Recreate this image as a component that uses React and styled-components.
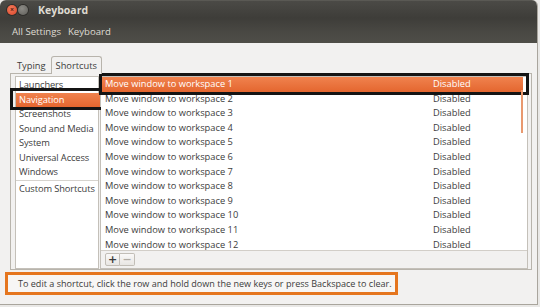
import React from 'react';
import styled, { createGlobalStyle } from 'styled-components';

const GlobalStyle = createGlobalStyle`
  html, body { margin: 0; padding: 0; background: #e9e8e6; }
  body { font-family: "Open Sans", "DejaVu Sans", sans-serif; font-size: 9.3px; color: #3c3c3c; }
`;

const Window = styled.div`
  width: 537px;
  height: 304px;
  background: #f2f1f0;
  border-radius: 6px 6px 0 0;
  border-right: 1px solid #a9a59d;
  border-bottom: 1px solid #a9a59d;
  display: flex;
  flex-direction: column;
  overflow: hidden;
`;

const TitleBar = styled.div`
  height: 18px;
  background: linear-gradient(#4b4a46, #3e3d39);
  display: flex;
  align-items: center;
  padding-left: 7px;
  border-top: 1px solid #5a5954;
  box-sizing: border-box;
`;

const WinButton = styled.span`
  width: 10px;
  height: 10px;
  border-radius: 50%;
  margin-right: 1px;
  display: flex;
  align-items: center;
  justify-content: center;
  background: ${p => (p.close ? 'radial-gradient(circle at 40% 35%, #f47a5a, #d9452a)' : 'radial-gradient(circle at 40% 35%, #8c8b86, #5f5e59)')};
  box-shadow: 0 0 0 1px #2e2d2a;
  font-size: 7px;
  line-height: 1;
  color: #5a1c10;
  font-weight: bold;
`;

const Title = styled.span`
  margin-left: 9px;
  font-weight: bold;
  font-size: 10.5px;
  color: #dfdbd2;
`;

const Toolbar = styled.div`
  height: 25px;
  background: linear-gradient(#3e3d39, #4a4944 60%, #4f4e48);
  display: flex;
  align-items: center;
  padding: 2px 0 0 12px;
  box-sizing: border-box;
  gap: 7px;
  font-size: 9.6px;
  color: #dfdbd2;
`;

const Body = styled.div`
  flex: 1;
  display: flex;
  flex-direction: column;
  padding: 12px 5px 0 5px;
`;

const Tabs = styled.div`
  display: flex;
  margin-left: 5px;
  height: 18px;
  align-items: flex-end;
`;

const Tab = styled.div`
  height: 18px;
  padding: 0 4px 0 ${p => (p.active ? 4 : 6)}px;
  display: flex;
  align-items: center;
  box-sizing: border-box;
  border: 1px solid ${p => (p.active ? '#b8b4ac' : 'transparent')};
  border-bottom: none;
  border-radius: 3px 3px 0 0;
  background: ${p => (p.active ? '#f2f1f0' : 'transparent')};
  margin-bottom: -1px;
  position: relative;
  z-index: 1;
`;

const Notebook = styled.div`
  margin-left: 5px;
  height: 197px;
  box-sizing: border-box;
  border: 1px solid #b8b4ac;
  padding: 2px 3px 0 4px;
  display: flex;
`;

const CategoryList = styled.div`
  width: 84px;
  height: 193px;
  box-sizing: border-box;
  background: #fff;
  border: 1px solid #c4c0b9;
  padding-top: 1px;
`;

const Category = styled.div`
  height: 14.5px;
  line-height: 14.5px;
  padding-left: 3px;
  position: relative;
  white-space: nowrap;
  letter-spacing: -0.1px;
  ${p => p.selected && `
    background: linear-gradient(#f0824e, #e4662f);
    color: #fff;
    margin-right: -2px;
    &::after {
      content: "";
      position: absolute;
      inset: -4.5px -4px -3px -6px;
      border: 3px solid #141414;
    }
  `}
`;

const Separator = styled.div`
  height: 1px;
  background: #d6d3ce;
  margin: 0.5px 0 1px;
`;

const ShortcutPanel = styled.div`
  flex: 1;
  height: 193px;
  box-sizing: border-box;
  border: 1px solid #c4c0b9;
  display: flex;
  flex-direction: column;
  margin-left: 1px;
`;

const ShortcutList = styled.div`
  height: 173px;
  background: #fff;
  padding-right: 4px;
  position: relative;
`;

const Row = styled.div`
  height: ${p => p.h || 14.6}px;
  line-height: 14.6px;
  overflow: ${p => (p.h ? 'hidden' : 'visible')};
  display: grid;
  grid-template-columns: 328px 1fr;
  padding-left: 4px;
  position: relative;
  white-space: nowrap;
  ${p => p.selected && `
    background: linear-gradient(#f0824e, #e4662f);
    color: #fff;
    &::after {
      content: "";
      position: absolute;
      inset: -4px -6px -3.5px -2px;
      border: 3px solid #141414;
    }
  `}
`;

const ScrollIndicator = styled.div`
  position: absolute;
  right: 4px;
  top: 13px;
  width: 2px;
  height: 43px;
  background: #e9996f;
`;

const ButtonStrip = styled.div`
  flex: 1;
  border-top: 1px solid #d2cec8;
  display: flex;
  align-items: center;
  padding-left: 4px;
`;

const SmallButton = styled.button`
  width: 15px;
  height: 13px;
  padding: 0;
  border: 1px solid #c2beb7;
  border-radius: ${p => (p.first ? '2px 0 0 2px' : '0 2px 2px 0')};
  border-left-width: ${p => (p.first ? '1px' : '0')};
  background: linear-gradient(#faf9f8, #e8e6e3);
  font-family: "DejaVu Sans", sans-serif;
  font-size: 11px;
  line-height: 11px;
  font-weight: bold;
  color: ${p => (p.disabled ? '#b0aca5' : '#3c3c3c')};
`;

const Hint = styled.div`
  width: 393px;
  height: 23px;
  box-sizing: border-box;
  margin-top: 2px;
  border: 3px solid #e5761f;
  background: #f7f6f5;
  display: flex;
  align-items: center;
  padding-left: 10px;
  white-space: nowrap;
  font-size: 9.05px;
`;

const categories = ['Launchers', 'Navigation', 'Screenshots', 'Sound and Media', 'System', 'Universal Access', 'Windows'];
const rows = Array.from({ length: 12 }, (_, i) => `Move window to workspace ${i + 1}`);

const App = () => (
  <>
    <GlobalStyle />
    <Window>
      <TitleBar>
        <WinButton close>×</WinButton>
        <WinButton />
        <Title>Keyboard</Title>
      </TitleBar>
      <Toolbar>
        <span>All Settings</span>
        <span>Keyboard</span>
      </Toolbar>
      <Body>
        <Tabs>
          <Tab>Typing</Tab>
          <Tab active>Shortcuts</Tab>
        </Tabs>
        <Notebook>
          <CategoryList>
            {categories.map(c => (
              <Category key={c} selected={c === 'Navigation'}>{c}</Category>
            ))}
            <Separator />
            <Category>Custom Shortcuts</Category>
          </CategoryList>
          <ShortcutPanel>
            <ShortcutList>
              {rows.map((r, i) => (
                <Row key={r} selected={i === 0} h={i === 11 ? 12.4 : undefined}>
                  <span>{r}</span>
                  <span>Disabled</span>
                </Row>
              ))}
              <ScrollIndicator />
            </ShortcutList>
            <ButtonStrip>
              <SmallButton first>+</SmallButton>
              <SmallButton disabled>−</SmallButton>
            </ButtonStrip>
          </ShortcutPanel>
        </Notebook>
        <Hint>To edit a shortcut, click the row and hold down the new keys or press Backspace to clear.</Hint>
      </Body>
    </Window>
  </>
);

export default App;
